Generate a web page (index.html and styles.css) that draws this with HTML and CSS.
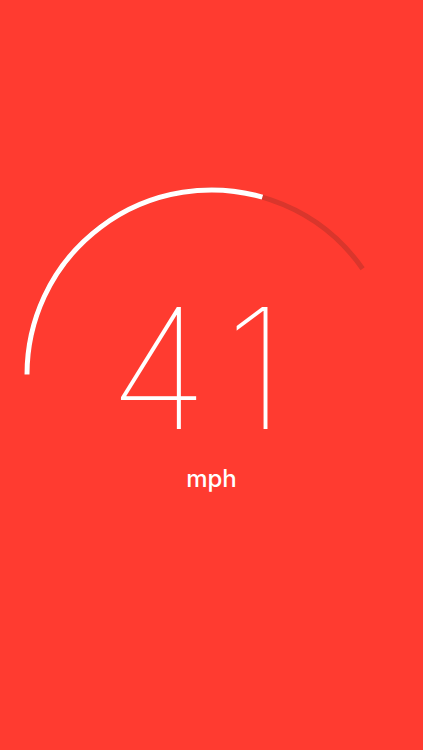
FILE: index.html
```html
<!DOCTYPE html>
<html lang="en">
<head>
    <meta charset="UTF-8">
    <meta name="viewport" content="width=device-width, initial-scale=1.0">
    <title>Speedometer</title>
    <link rel="stylesheet" href="styles.css">
</head>
<body>
    <div class="screen">
        <div class="dial">
            <svg class="gauge" width="423" height="200" viewBox="0 0 423 200">
                <path class="track" d="M27 194.5 A184.5 184.5 0 0 1 362.6 88.7"/>
                <path class="progress" d="M27 194.5 A184.5 184.5 0 0 1 262.4 17.15"/>
            </svg>
            <div class="speed" id="speed">41</div>
        </div>
        <div class="unit">mph</div>
    </div>
</body>
</html>
```

FILE: styles.css
```css
body {
    margin: 0;
    background: #ff3b30;
    color: #fff;
    font-family: 'Inter', 'Roboto', sans-serif;
}
.screen {
    height: 750px;
    padding-top: 180px;
    box-sizing: border-box;
    display: flex;
    flex-direction: column;
    align-items: center;
}
.dial {
    display: grid;
    width: 423px;
    height: 272px;
}
.dial > * {
    grid-area: 1 / 1;
}
.gauge {
    align-self: start;
    display: block;
}
.gauge path {
    fill: none;
    stroke-width: 5;
}
.track {
    stroke: #d9362c;
}
.progress {
    stroke: #fff;
}
.speed {
    align-self: end;
    text-align: center;
    font-size: 168px;
    font-weight: 100;
    line-height: 1;
    letter-spacing: 18px;
    padding-right: 10px;
}
.unit {
    margin-top: 12px;
    font-size: 24px;
    font-weight: 500;
}
```
